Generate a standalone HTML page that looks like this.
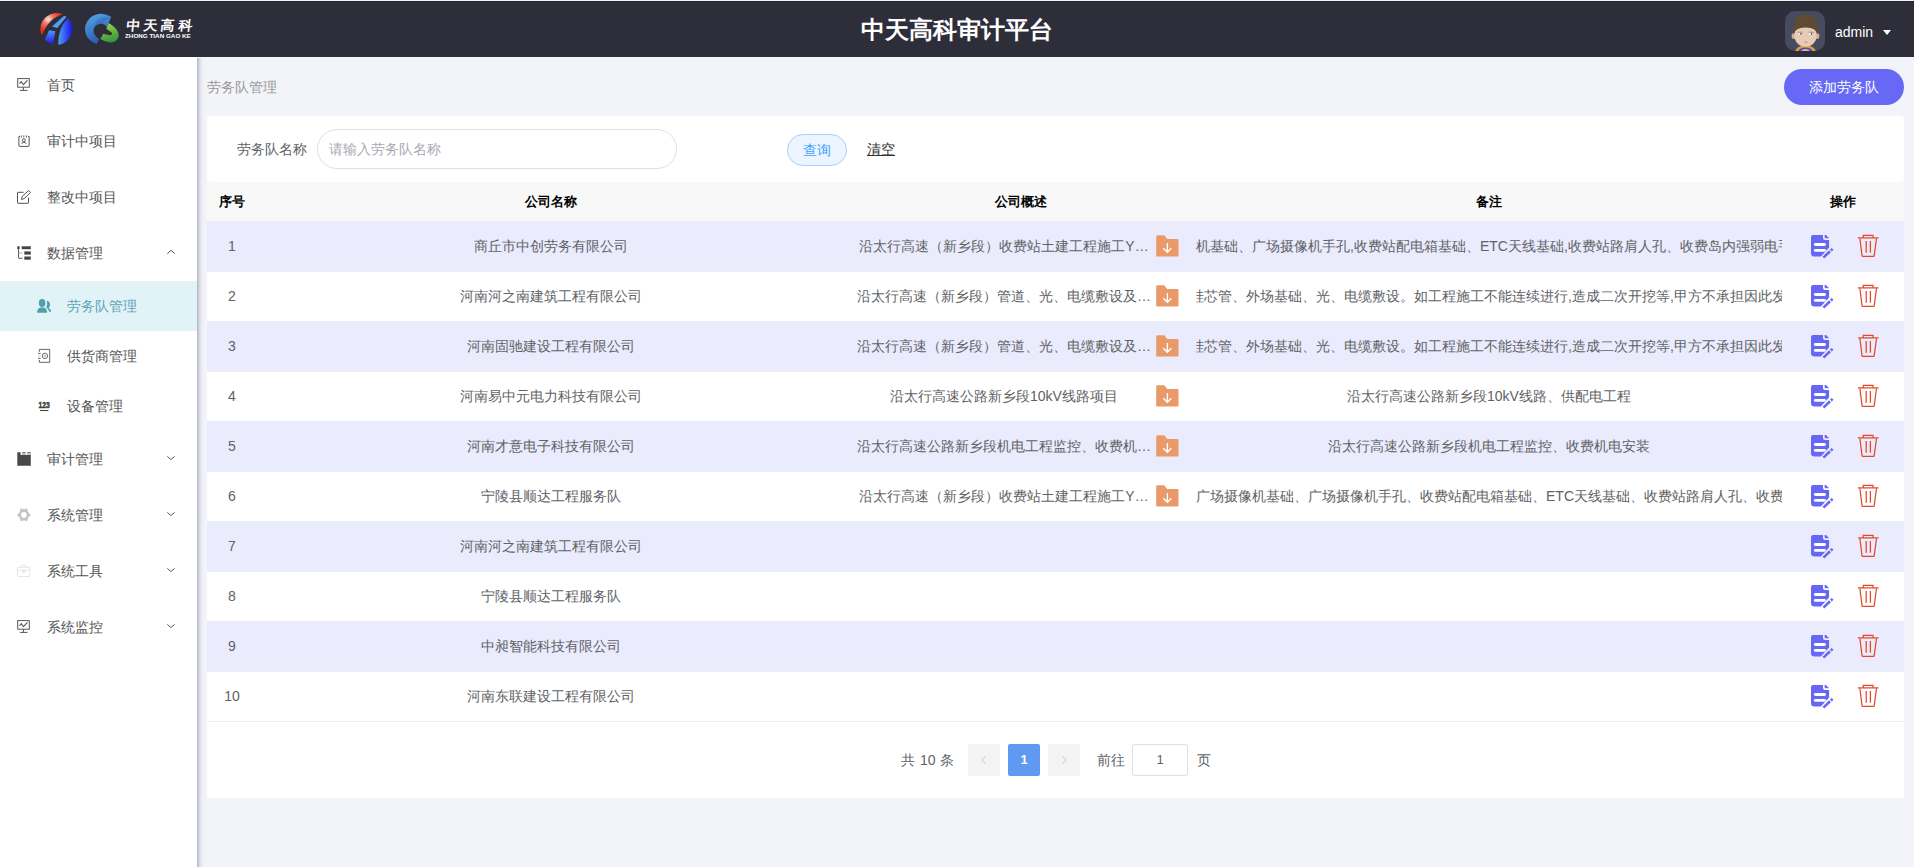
<!DOCTYPE html>
<html><head><meta charset="utf-8">
<style>
*{box-sizing:border-box;margin:0;padding:0}
html,body{width:1914px;height:867px;overflow:hidden;background:#f3f4f9;font-family:"Liberation Sans",sans-serif;font-size:14px;color:#606266}
.abs{position:absolute}
#hdr{position:absolute;left:0;top:0;width:1914px;height:57px;background:#2e2e3a;border-top:1px solid #f4f5f3}
#hdr:after{content:"";position:absolute;left:0;top:0;width:100%;height:1px;background:#23222f}
#title{position:absolute;left:0;width:1914px;top:14px;text-align:center;color:#fff;font-size:24px;font-weight:bold;line-height:30px}
#side{position:absolute;left:0;top:57px;width:197px;height:810px;background:#fff}
#shadow{position:absolute;left:197px;top:58px;width:10px;height:809px;background:linear-gradient(to right,#b9bcc8 0,#b9bcc8 1px,#c9ccd6 1px,#c9ccd6 2px,#d6d9e2 2px,#d6d9e2 3px,#e2e3ea 3px,#e2e3ea 4px,#eaebf1 4px,#eaebf1 5px,#eeeff5 5px,#eeeff5 6px,#f1f2f7 6px,#f1f2f7 8px,#f3f4f9 8px)}
.mi{position:absolute;left:0;width:197px;height:56px;color:#555}
.mi .t{position:absolute;left:47px;top:0;line-height:56px;font-size:14px}
.mi svg{position:absolute}
.sub{height:50px}
.sub .t{left:67px;line-height:50px}
.act{background:#e2f3f8}
.act .t{color:#5ba5b5}
.chev{position:absolute;left:165px;width:11px;height:7px}
#crumb{position:absolute;left:207px;top:78px;color:#999;font-size:14px;line-height:18px}
#addbtn{position:absolute;left:1784px;top:69px;width:120px;height:36px;border-radius:18px;background:#6768f5;color:#fff;text-align:center;line-height:36px;font-size:14px}
#card{position:absolute;left:207px;top:116px;width:1697px;height:66px;background:#fff;border-radius:4px}
#lbl{position:absolute;left:237px;top:140px;line-height:18px;color:#606266}
#inp{position:absolute;left:317px;top:129px;width:360px;height:40px;border:1px solid #dcdfe6;border-radius:20px;background:#fff}
#inp span{position:absolute;left:11px;top:10px;line-height:18px;color:#a8abb2}
#qbtn{position:absolute;left:787px;top:134px;width:60px;height:32px;border:1px solid #a9d0ff;border-radius:16px;background:#ecf5ff;color:#409eff;text-align:center;line-height:30px;font-size:14px}
#clr{position:absolute;left:867px;top:140px;line-height:18px;color:#303133;text-decoration:underline}
#thead{position:absolute;left:207px;top:182px;width:1697px;height:40px;background:#f8f8f8;border-bottom:1px solid #ebeef5}
.th{position:absolute;top:0;height:39px;line-height:39px;text-align:center;color:#000;font-weight:bold;font-size:13px}
.row{position:absolute;left:207px;width:1697px;height:50px;background:#fff;border-bottom:1px solid #ebeef5}
.row.odd{background:#eaebfc}
.c{position:absolute;top:0;height:49px;line-height:49px;text-align:center;white-space:nowrap;overflow:hidden;color:#606266}
.c1{left:0;width:50px}
.c2{left:50px;width:587px}
.c3{left:639px;width:350px}
.c4{left:989px;width:586px}
.c5{left:1575px;width:122px}
.ov{position:absolute;top:0}
.ds{position:absolute;top:0;left:11px;width:294px;overflow:hidden;text-overflow:ellipsis;text-align:center}
.fold{position:absolute;left:305px;top:8px}
.ed{position:absolute;left:24px;top:8px}
.tr{position:absolute;left:70px;top:8px}
#pag{position:absolute;left:207px;top:722px;width:1697px;height:76px;background:#fff}
.pb{position:absolute;top:744px;width:32px;height:32px;background:#f4f4f5;border-radius:2px}
#pact{position:absolute;left:1008px;top:744px;width:32px;height:32px;background:#6099f2;border-radius:2px;color:#fff;font-weight:bold;text-align:center;line-height:32px;font-size:13px}
#pinp{position:absolute;left:1132px;top:744px;width:56px;height:32px;border:1px solid #dcdfe6;border-radius:3px;background:#fff;text-align:center;line-height:30px;font-size:13px;color:#606266}
.ptxt{position:absolute;top:751px;line-height:18px;font-size:14px;color:#606266;word-spacing:1px}
</style></head>
<body>
<div id="hdr">
  <div id="title">中天高科审计平台</div>
</div>
<svg class="abs" style="left:36px;top:8px" width="90" height="42" viewBox="0 0 90 42">
 <defs>
  <radialGradient id="gr" cx="0.35" cy="0.3" r="0.75"><stop offset="0" stop-color="#f8e4e0"/><stop offset="0.3" stop-color="#ee7a6a"/><stop offset="0.7" stop-color="#e8341e"/><stop offset="1" stop-color="#e22a14"/></radialGradient>
  <linearGradient id="gb1" x1="0" y1="0" x2="0" y2="1"><stop offset="0" stop-color="#4a9cf4"/><stop offset="1" stop-color="#2a10f0"/></linearGradient>
  <linearGradient id="gb2" x1="0" y1="0" x2="1" y2="0"><stop offset="0" stop-color="#4aa2f2"/><stop offset="1" stop-color="#1e12ee"/></linearGradient>
  <linearGradient id="gc" x1="0" y1="0" x2="0.4" y2="1"><stop offset="0" stop-color="#58a8ea"/><stop offset="1" stop-color="#2a5cb0"/></linearGradient>
  <linearGradient id="gg" x1="0" y1="0" x2="0.3" y2="1"><stop offset="0" stop-color="#a8d850"/><stop offset="1" stop-color="#3a9a3a"/></linearGradient>
 </defs>
 <path fill="url(#gr)" d="M5.3 26.2A16 16 0 0 1 26.9 6.3Q13 10 6.2 26.6Z"/>
 <path fill="#4aa0f2" d="M16 18.4L28.1 7.7L30.5 8.7L21.3 19.9Z"/>
 <path fill="url(#gb1)" d="M13.1 22.3L19.4 23.3L16.7 36.3Q11.5 34.6 9 31.5Z"/>
 <path fill="url(#gb2)" d="M32 10.2A16 16 0 0 1 22.3 36.8Q21.8 20 32 10.2Z"/>
 <path fill="url(#gc)" d="M75.1 8.7Q64 2.5 54.5 9.5Q46 17 50.5 28Q54 33.5 60.6 35.9L63 31Q57.5 28 57.5 22Q58.5 15.5 66 15.5Q69.5 16.5 71 19Z"/>
 <path fill="url(#gg)" d="M72.7 15Q82 20.5 82.8 27Q82.5 34 74.6 34.4Q68.5 34 64.4 31L67.3 25.7Q71 27 74.5 27.3Q77 26.5 75.6 24.5L70.3 20.8Z"/>
 <path fill="#2f6cc0" opacity="0.55" d="M58.5 16Q62 9 70 9.5Q73.5 10.5 75.1 8.7Q69 13 66 15.5Q61 15.5 58.5 19Z"/>
</svg>
<div class="abs" style="left:127px;top:16px;color:#fff;font-weight:bold;font-size:14px;line-height:20px;white-space:nowrap;letter-spacing:3.4px;transform-origin:0 0;transform:skewX(-6deg) scaleY(0.95)">中天高科</div>
<div class="abs" style="left:125px;top:33px;color:#fff;font-weight:bold;font-size:6px;line-height:6px;white-space:nowrap;transform-origin:0 0;transform:scaleX(1.05)">ZHONG TIAN GAO KE</div>
<svg class="abs" style="left:1785px;top:11px" width="40" height="40" viewBox="0 0 40 40">
 <defs><clipPath id="av"><rect width="40" height="40" rx="10"/></clipPath></defs>
 <g clip-path="url(#av)">
 <rect width="40" height="40" fill="#464b5d"/>
 <path d="M10 41Q11 35 20.5 34.5Q30 35 31 41Z" fill="#d7a43c"/>
 <path d="M13 41Q14 36.5 20.5 36.5Q27 36.5 28 41Z" fill="#5b48b0"/>
 <path d="M16 41Q16.5 38 20.5 38Q24.5 38 25 41Z" fill="#e0b890"/>
 <ellipse cx="8.6" cy="25" rx="2" ry="3" fill="#d9ae94"/>
 <ellipse cx="32.4" cy="25" rx="2" ry="3" fill="#d9ae94"/>
 <ellipse cx="20.5" cy="24.5" rx="11.2" ry="11.3" fill="#e7cbb5"/>
 <path d="M8.2 24Q6.8 3.5 20.5 3.6Q34.2 3.5 33 24Q31.8 16.8 20.5 16.4Q9.5 16.8 8.2 24Z" fill="#5f4b31"/>
 
 <ellipse cx="15.3" cy="22.8" rx="2.4" ry="1" fill="#f2f2f2"/>
 <ellipse cx="26" cy="22.8" rx="2.4" ry="1" fill="#f2f2f2"/>
 <circle cx="16" cy="22.9" r="0.8" fill="#3a3a3a"/>
 <circle cx="26.6" cy="22.9" r="0.8" fill="#3a3a3a"/>
 <path d="M12.5 21.3L18 21.2M23.5 21.2L29 21.3" stroke="#9a7a60" stroke-width="0.7"/>
 <path d="M19 31H22.5" stroke="#b8887a" stroke-width="0.8"/>
 </g>
</svg>
<div class="abs" style="left:1835px;top:24px;color:#fff;font-size:14px;line-height:16px">admin</div>
<svg class="abs" style="left:1882px;top:29px" width="10" height="7" viewBox="0 0 10 7"><path d="M1 1H9L5 6Z" fill="#fff"/></svg>
<div id="side">
 <div class="mi" style="top:0"><span class="t">首页</span></div>
 <div class="mi" style="top:56px"><span class="t">审计中项目</span></div>
 <div class="mi" style="top:112px"><span class="t">整改中项目</span></div>
 <div class="mi" style="top:168px"><span class="t">数据管理</span></div>
 <div class="mi sub act" style="top:224px"><span class="t">劳务队管理</span></div>
 <div class="mi sub" style="top:274px"><span class="t">供货商管理</span></div>
 <div class="mi sub" style="top:324px"><span class="t">设备管理</span></div>
 <div class="mi" style="top:374px"><span class="t">审计管理</span></div>
 <div class="mi" style="top:430px"><span class="t">系统管理</span></div>
 <div class="mi" style="top:486px"><span class="t">系统工具</span></div>
 <div class="mi" style="top:542px"><span class="t">系统监控</span></div>
</div>
<svg class="abs" style="left:12px;top:72px" width="24" height="24" viewBox="0 0 24 24" fill="none" stroke="#555" stroke-width="1"><rect x="5.7" y="6.6" width="11.6" height="8.6"/><path d="M11.4 15.2V18.4M7.9 18.4H15.5"/><path d="M7.5 11.6L9.4 9.6L11.4 12.7L15.5 8.3" stroke-width="1.1"/></svg>
<svg class="abs" style="left:12px;top:129px" width="24" height="24" viewBox="0 0 24 24" fill="none" stroke="#555" stroke-width="1"><path d="M8 7.4H6.9V16.9Q6.9 17.4 7.4 17.4H16.6Q17.1 17.4 17.1 16.9V7.4H16"/><path d="M9.4 6.4V8.6M11.8 6.4V8.6M14.4 6.4V8.6" stroke-width="0.9"/><circle cx="11.8" cy="11.3" r="1.5"/><path d="M9.4 14.4Q11.8 11.6 14.4 14.4"/></svg>
<svg class="abs" style="left:12px;top:185px" width="24" height="24" viewBox="0 0 24 24" fill="none" stroke="#555" stroke-width="1"><path d="M11.6 7.3H6Q5.5 7.3 5.5 7.8V17.8Q5.5 18.3 6 18.3H16Q16.5 18.3 16.5 17.8V12.7"/><path d="M9.4 14.4L10.2 11.4L16.7 5.5L18.6 7.4L12.2 13.6Z"/></svg>
<svg class="abs" style="left:12px;top:241px" width="24" height="24" viewBox="0 0 24 24"><rect x="5.3" y="5.3" width="2.3" height="2.7" fill="#444"/><path d="M6.5 8V16.8Q6.5 17.3 7 17.3H10.5" stroke="#444" stroke-width="0.9" fill="none"/><path d="M6.5 11.9H10.5" stroke="#aaa" stroke-width="0.9"/><rect x="9.7" y="5.3" width="9.1" height="2.9" fill="#444"/><rect x="12.3" y="10.4" width="6.5" height="3.2" fill="#444"/><rect x="12.3" y="15.5" width="6.5" height="3.2" fill="#444"/></svg>
<svg class="abs" style="left:32px;top:294px" width="24" height="24" viewBox="0 0 24 24"><path fill="#4fa0ad" d="M14.8 6.6Q18.3 7.6 18 11.2Q17.7 13 16.6 13.7Q19.2 15 19.2 17.8L17.2 17.8Q16.8 15 14.4 13.8Q15.8 10.5 14.8 6.6Z"/><ellipse cx="10.1" cy="9.1" rx="3.3" ry="4" fill="#4fa0ad"/><path fill="#4fa0ad" d="M5.1 18.8Q5 14.6 8.4 13.5H11.9Q15.2 14.6 15.1 18.8Z"/></svg>
<svg class="abs" style="left:32px;top:344px" width="24" height="24" viewBox="0 0 24 24" fill="none" stroke="#555" stroke-width="0.9"><path d="M7.4 7.8V5.4H17.7V18.3H7.4V16"/><path d="M6 9.4H8.6M6 14.4H8.6"/><path d="M6 11.9H8.6" stroke="#bbb"/><circle cx="12.9" cy="11.9" r="2.7"/><rect x="12.2" y="11" width="1.4" height="1.6" fill="#888" stroke="none"/></svg>
<svg class="abs" style="left:32px;top:394px" width="24" height="24" viewBox="0 0 24 24"><text x="6.5" y="13.8" font-family="Liberation Sans" font-weight="bold" font-size="9.3" fill="#3a3a3a" stroke="#3a3a3a" stroke-width="0.45" textLength="11.4" lengthAdjust="spacingAndGlyphs">123</text><path d="M8 16.5H16.4" stroke="#444" stroke-width="1.1"/></svg>
<svg class="abs" style="left:12px;top:447px" width="24" height="24" viewBox="0 0 24 24"><path fill="#494949" d="M5.3 5.3H8.6V8H18.8V18.7H5.3Z"/><rect x="10.1" y="5.3" width="3.6" height="1" fill="#494949"/><rect x="15.2" y="5.3" width="3.6" height="1" fill="#494949"/><rect x="10.1" y="6.3" width="3.6" height="1.7" fill="#bbb"/><rect x="15.2" y="6.3" width="3.6" height="1.7" fill="#bbb"/></svg>
<svg class="abs" style="left:12px;top:503px" width="24" height="24" viewBox="0 0 24 24"><path fill="#c4c4c4" fill-rule="evenodd" d="M8.3 6.3L9.6 5.3L10.6 6.3H13.2L14.3 5.3L15.5 6.3L16 8.9L18.8 11.9L16 14.9L15.5 17.5L14.3 18.5L13.2 17.5H10.6L9.6 18.5L8.3 17.5L7.8 14.9L5.1 11.9L7.8 8.9ZM11.9 9.1A2.8 2.8 0 1 0 11.9 14.7A2.8 2.8 0 1 0 11.9 9.1Z"/></svg>
<svg class="abs" style="left:12px;top:559px" width="24" height="24" viewBox="0 0 24 24" fill="none" stroke="#e3e3e3" stroke-width="0.9"><rect x="5.4" y="8.3" width="12.4" height="9.2" rx="0.6"/><path d="M9.3 8.3V6.2H13.9V8.3M5.4 11.4H17.8"/><circle cx="11.9" cy="12.4" r="1" fill="#e0e0e0"/></svg>
<svg class="abs" style="left:12px;top:614px" width="24" height="24" viewBox="0 0 24 24" fill="none" stroke="#555" stroke-width="1"><rect x="5.7" y="6.6" width="11.6" height="8.6"/><path d="M11.4 15.2V18.4M7.9 18.4H15.5"/><path d="M7.5 11.6L9.4 9.6L11.4 12.7L15.5 8.3" stroke-width="1.1"/></svg>
<svg class="abs" style="left:158px;top:240px" width="24" height="24" viewBox="0 0 24 24" fill="none" stroke="#555" stroke-width="1"><path d="M9.3 13.6L12.9 10.3L16.8 13.6"/></svg>
<svg class="abs" style="left:158px;top:446px" width="24" height="24" viewBox="0 0 24 24" fill="none" stroke="#555" stroke-width="1"><path d="M9.3 10.4L12.9 13.6L16.7 10.4"/></svg>
<svg class="abs" style="left:158px;top:502px" width="24" height="24" viewBox="0 0 24 24" fill="none" stroke="#555" stroke-width="1"><path d="M9.3 10.4L12.9 13.6L16.7 10.4"/></svg>
<svg class="abs" style="left:158px;top:558px" width="24" height="24" viewBox="0 0 24 24" fill="none" stroke="#555" stroke-width="1"><path d="M9.3 10.4L12.9 13.6L16.7 10.4"/></svg>
<svg class="abs" style="left:158px;top:614px" width="24" height="24" viewBox="0 0 24 24" fill="none" stroke="#555" stroke-width="1"><path d="M9.3 10.4L12.9 13.6L16.7 10.4"/></svg>
<div id="shadow"></div>
<div id="crumb">劳务队管理</div>
<div id="addbtn">添加劳务队</div>
<div id="card"></div>
<div id="lbl">劳务队名称</div>
<div id="inp"><span>请输入劳务队名称</span></div>
<div id="qbtn">查询</div>
<div id="clr">清空</div>
<div id="thead">
  <div class="th c1">序号</div>
  <div class="th c2">公司名称</div>
  <div class="th c3">公司概述</div>
  <div class="th c4">备注</div>
  <div class="th c5">操作</div>
</div>
<div class="row odd" style="top:222px"><div class="c c1">1</div><div class="c c2">商丘市中创劳务有限公司</div><div class="c c3"><span class="ds">沿太行高速（新乡段）收费站土建工程施工Y…</span><svg class="fold" width="32" height="32" viewBox="0 0 32 32"><path fill="#e99a68" d="M5.2 6.4Q5.2 5.2 6.4 5.2H13.3L16.2 8.9H26.3Q27.5 8.9 27.5 10.1V25.4Q27.5 26.6 26.3 26.6H6.4Q5.2 26.6 5.2 25.4Z"/><path d="M16.4 13.1V22M12.3 18.2L16.4 22.2L20.4 18.2" stroke="#fff" stroke-width="1.4" fill="none"/></svg></div><div class="c c4"><span class="ov" style="left:0px">机基础、广场摄像机手孔,收费站配电箱基础、ETC天线基础,收费站路肩人孔、收费岛内强弱电手孔</span></div><div class="c c5"><svg class="ed" width="32" height="32" viewBox="0 0 32 32"><path fill="#6667f4" d="M5 7Q5 5 7 5H17V8Q17 10 19 10H23.1V17.6L14.9 26.6H8.6Q5 26.6 5 23Z"/><path fill="#6667f4" d="M18.6 5H20L23.1 8.2H19.6Q18.6 8.2 18.6 7.2Z"/><rect x="7.9" y="13.1" width="12" height="2.8" rx="1.4" fill="#fff"/><rect x="7.9" y="19" width="12" height="2.8" rx="1.4" fill="#fff"/><path d="M17.4 27.6L24 21.3M24.9 20.5L26.6 18.9" stroke="#6667f4" stroke-width="2.6"/></svg><svg class="tr" width="32" height="32" viewBox="0 0 32 32" fill="none" stroke="#e4472b" stroke-width="1.25"><path d="M5.9 7.9H26.6"/><path d="M11.3 7.9V5.3H21V7.9"/><path d="M7.9 8.5L10 25.6Q10.1 26.4 10.9 26.4H21.3Q22.1 26.4 22.2 25.6L24.5 8.5"/><path d="M14.2 11.1V22.7M18.4 11.1V22.7"/></svg></div></div>
<div class="row" style="top:272px"><div class="c c1">2</div><div class="c c2">河南河之南建筑工程有限公司</div><div class="c c3"><span class="ds">沿太行高速（新乡段）管道、光、电缆敷设及…</span><svg class="fold" width="32" height="32" viewBox="0 0 32 32"><path fill="#e99a68" d="M5.2 6.4Q5.2 5.2 6.4 5.2H13.3L16.2 8.9H26.3Q27.5 8.9 27.5 10.1V25.4Q27.5 26.6 26.3 26.6H6.4Q5.2 26.6 5.2 25.4Z"/><path d="M16.4 13.1V22M12.3 18.2L16.4 22.2L20.4 18.2" stroke="#fff" stroke-width="1.4" fill="none"/></svg></div><div class="c c4"><span class="ov" style="left:-6px">硅芯管、外场基础、光、电缆敷设。如工程施工不能连续进行,造成二次开挖等,甲方不承担因此发生</span></div><div class="c c5"><svg class="ed" width="32" height="32" viewBox="0 0 32 32"><path fill="#6667f4" d="M5 7Q5 5 7 5H17V8Q17 10 19 10H23.1V17.6L14.9 26.6H8.6Q5 26.6 5 23Z"/><path fill="#6667f4" d="M18.6 5H20L23.1 8.2H19.6Q18.6 8.2 18.6 7.2Z"/><rect x="7.9" y="13.1" width="12" height="2.8" rx="1.4" fill="#fff"/><rect x="7.9" y="19" width="12" height="2.8" rx="1.4" fill="#fff"/><path d="M17.4 27.6L24 21.3M24.9 20.5L26.6 18.9" stroke="#6667f4" stroke-width="2.6"/></svg><svg class="tr" width="32" height="32" viewBox="0 0 32 32" fill="none" stroke="#e4472b" stroke-width="1.25"><path d="M5.9 7.9H26.6"/><path d="M11.3 7.9V5.3H21V7.9"/><path d="M7.9 8.5L10 25.6Q10.1 26.4 10.9 26.4H21.3Q22.1 26.4 22.2 25.6L24.5 8.5"/><path d="M14.2 11.1V22.7M18.4 11.1V22.7"/></svg></div></div>
<div class="row odd" style="top:322px"><div class="c c1">3</div><div class="c c2">河南固驰建设工程有限公司</div><div class="c c3"><span class="ds">沿太行高速（新乡段）管道、光、电缆敷设及…</span><svg class="fold" width="32" height="32" viewBox="0 0 32 32"><path fill="#e99a68" d="M5.2 6.4Q5.2 5.2 6.4 5.2H13.3L16.2 8.9H26.3Q27.5 8.9 27.5 10.1V25.4Q27.5 26.6 26.3 26.6H6.4Q5.2 26.6 5.2 25.4Z"/><path d="M16.4 13.1V22M12.3 18.2L16.4 22.2L20.4 18.2" stroke="#fff" stroke-width="1.4" fill="none"/></svg></div><div class="c c4"><span class="ov" style="left:-6px">硅芯管、外场基础、光、电缆敷设。如工程施工不能连续进行,造成二次开挖等,甲方不承担因此发生</span></div><div class="c c5"><svg class="ed" width="32" height="32" viewBox="0 0 32 32"><path fill="#6667f4" d="M5 7Q5 5 7 5H17V8Q17 10 19 10H23.1V17.6L14.9 26.6H8.6Q5 26.6 5 23Z"/><path fill="#6667f4" d="M18.6 5H20L23.1 8.2H19.6Q18.6 8.2 18.6 7.2Z"/><rect x="7.9" y="13.1" width="12" height="2.8" rx="1.4" fill="#fff"/><rect x="7.9" y="19" width="12" height="2.8" rx="1.4" fill="#fff"/><path d="M17.4 27.6L24 21.3M24.9 20.5L26.6 18.9" stroke="#6667f4" stroke-width="2.6"/></svg><svg class="tr" width="32" height="32" viewBox="0 0 32 32" fill="none" stroke="#e4472b" stroke-width="1.25"><path d="M5.9 7.9H26.6"/><path d="M11.3 7.9V5.3H21V7.9"/><path d="M7.9 8.5L10 25.6Q10.1 26.4 10.9 26.4H21.3Q22.1 26.4 22.2 25.6L24.5 8.5"/><path d="M14.2 11.1V22.7M18.4 11.1V22.7"/></svg></div></div>
<div class="row" style="top:372px"><div class="c c1">4</div><div class="c c2">河南易中元电力科技有限公司</div><div class="c c3"><span class="ds">沿太行高速公路新乡段10kV线路项目</span><svg class="fold" width="32" height="32" viewBox="0 0 32 32"><path fill="#e99a68" d="M5.2 6.4Q5.2 5.2 6.4 5.2H13.3L16.2 8.9H26.3Q27.5 8.9 27.5 10.1V25.4Q27.5 26.6 26.3 26.6H6.4Q5.2 26.6 5.2 25.4Z"/><path d="M16.4 13.1V22M12.3 18.2L16.4 22.2L20.4 18.2" stroke="#fff" stroke-width="1.4" fill="none"/></svg></div><div class="c c4">沿太行高速公路新乡段10kV线路、供配电工程</div><div class="c c5"><svg class="ed" width="32" height="32" viewBox="0 0 32 32"><path fill="#6667f4" d="M5 7Q5 5 7 5H17V8Q17 10 19 10H23.1V17.6L14.9 26.6H8.6Q5 26.6 5 23Z"/><path fill="#6667f4" d="M18.6 5H20L23.1 8.2H19.6Q18.6 8.2 18.6 7.2Z"/><rect x="7.9" y="13.1" width="12" height="2.8" rx="1.4" fill="#fff"/><rect x="7.9" y="19" width="12" height="2.8" rx="1.4" fill="#fff"/><path d="M17.4 27.6L24 21.3M24.9 20.5L26.6 18.9" stroke="#6667f4" stroke-width="2.6"/></svg><svg class="tr" width="32" height="32" viewBox="0 0 32 32" fill="none" stroke="#e4472b" stroke-width="1.25"><path d="M5.9 7.9H26.6"/><path d="M11.3 7.9V5.3H21V7.9"/><path d="M7.9 8.5L10 25.6Q10.1 26.4 10.9 26.4H21.3Q22.1 26.4 22.2 25.6L24.5 8.5"/><path d="M14.2 11.1V22.7M18.4 11.1V22.7"/></svg></div></div>
<div class="row odd" style="top:422px"><div class="c c1">5</div><div class="c c2">河南才意电子科技有限公司</div><div class="c c3"><span class="ds">沿太行高速公路新乡段机电工程监控、收费机…</span><svg class="fold" width="32" height="32" viewBox="0 0 32 32"><path fill="#e99a68" d="M5.2 6.4Q5.2 5.2 6.4 5.2H13.3L16.2 8.9H26.3Q27.5 8.9 27.5 10.1V25.4Q27.5 26.6 26.3 26.6H6.4Q5.2 26.6 5.2 25.4Z"/><path d="M16.4 13.1V22M12.3 18.2L16.4 22.2L20.4 18.2" stroke="#fff" stroke-width="1.4" fill="none"/></svg></div><div class="c c4">沿太行高速公路新乡段机电工程监控、收费机电安装</div><div class="c c5"><svg class="ed" width="32" height="32" viewBox="0 0 32 32"><path fill="#6667f4" d="M5 7Q5 5 7 5H17V8Q17 10 19 10H23.1V17.6L14.9 26.6H8.6Q5 26.6 5 23Z"/><path fill="#6667f4" d="M18.6 5H20L23.1 8.2H19.6Q18.6 8.2 18.6 7.2Z"/><rect x="7.9" y="13.1" width="12" height="2.8" rx="1.4" fill="#fff"/><rect x="7.9" y="19" width="12" height="2.8" rx="1.4" fill="#fff"/><path d="M17.4 27.6L24 21.3M24.9 20.5L26.6 18.9" stroke="#6667f4" stroke-width="2.6"/></svg><svg class="tr" width="32" height="32" viewBox="0 0 32 32" fill="none" stroke="#e4472b" stroke-width="1.25"><path d="M5.9 7.9H26.6"/><path d="M11.3 7.9V5.3H21V7.9"/><path d="M7.9 8.5L10 25.6Q10.1 26.4 10.9 26.4H21.3Q22.1 26.4 22.2 25.6L24.5 8.5"/><path d="M14.2 11.1V22.7M18.4 11.1V22.7"/></svg></div></div>
<div class="row" style="top:472px"><div class="c c1">6</div><div class="c c2">宁陵县顺达工程服务队</div><div class="c c3"><span class="ds">沿太行高速（新乡段）收费站土建工程施工Y…</span><svg class="fold" width="32" height="32" viewBox="0 0 32 32"><path fill="#e99a68" d="M5.2 6.4Q5.2 5.2 6.4 5.2H13.3L16.2 8.9H26.3Q27.5 8.9 27.5 10.1V25.4Q27.5 26.6 26.3 26.6H6.4Q5.2 26.6 5.2 25.4Z"/><path d="M16.4 13.1V22M12.3 18.2L16.4 22.2L20.4 18.2" stroke="#fff" stroke-width="1.4" fill="none"/></svg></div><div class="c c4"><span class="ov" style="left:0px">广场摄像机基础、广场摄像机手孔、收费站配电箱基础、ETC天线基础、收费站路肩人孔、收费</span></div><div class="c c5"><svg class="ed" width="32" height="32" viewBox="0 0 32 32"><path fill="#6667f4" d="M5 7Q5 5 7 5H17V8Q17 10 19 10H23.1V17.6L14.9 26.6H8.6Q5 26.6 5 23Z"/><path fill="#6667f4" d="M18.6 5H20L23.1 8.2H19.6Q18.6 8.2 18.6 7.2Z"/><rect x="7.9" y="13.1" width="12" height="2.8" rx="1.4" fill="#fff"/><rect x="7.9" y="19" width="12" height="2.8" rx="1.4" fill="#fff"/><path d="M17.4 27.6L24 21.3M24.9 20.5L26.6 18.9" stroke="#6667f4" stroke-width="2.6"/></svg><svg class="tr" width="32" height="32" viewBox="0 0 32 32" fill="none" stroke="#e4472b" stroke-width="1.25"><path d="M5.9 7.9H26.6"/><path d="M11.3 7.9V5.3H21V7.9"/><path d="M7.9 8.5L10 25.6Q10.1 26.4 10.9 26.4H21.3Q22.1 26.4 22.2 25.6L24.5 8.5"/><path d="M14.2 11.1V22.7M18.4 11.1V22.7"/></svg></div></div>
<div class="row odd" style="top:522px"><div class="c c1">7</div><div class="c c2">河南河之南建筑工程有限公司</div><div class="c c3"></div><div class="c c4"></div><div class="c c5"><svg class="ed" width="32" height="32" viewBox="0 0 32 32"><path fill="#6667f4" d="M5 7Q5 5 7 5H17V8Q17 10 19 10H23.1V17.6L14.9 26.6H8.6Q5 26.6 5 23Z"/><path fill="#6667f4" d="M18.6 5H20L23.1 8.2H19.6Q18.6 8.2 18.6 7.2Z"/><rect x="7.9" y="13.1" width="12" height="2.8" rx="1.4" fill="#fff"/><rect x="7.9" y="19" width="12" height="2.8" rx="1.4" fill="#fff"/><path d="M17.4 27.6L24 21.3M24.9 20.5L26.6 18.9" stroke="#6667f4" stroke-width="2.6"/></svg><svg class="tr" width="32" height="32" viewBox="0 0 32 32" fill="none" stroke="#e4472b" stroke-width="1.25"><path d="M5.9 7.9H26.6"/><path d="M11.3 7.9V5.3H21V7.9"/><path d="M7.9 8.5L10 25.6Q10.1 26.4 10.9 26.4H21.3Q22.1 26.4 22.2 25.6L24.5 8.5"/><path d="M14.2 11.1V22.7M18.4 11.1V22.7"/></svg></div></div>
<div class="row" style="top:572px"><div class="c c1">8</div><div class="c c2">宁陵县顺达工程服务队</div><div class="c c3"></div><div class="c c4"></div><div class="c c5"><svg class="ed" width="32" height="32" viewBox="0 0 32 32"><path fill="#6667f4" d="M5 7Q5 5 7 5H17V8Q17 10 19 10H23.1V17.6L14.9 26.6H8.6Q5 26.6 5 23Z"/><path fill="#6667f4" d="M18.6 5H20L23.1 8.2H19.6Q18.6 8.2 18.6 7.2Z"/><rect x="7.9" y="13.1" width="12" height="2.8" rx="1.4" fill="#fff"/><rect x="7.9" y="19" width="12" height="2.8" rx="1.4" fill="#fff"/><path d="M17.4 27.6L24 21.3M24.9 20.5L26.6 18.9" stroke="#6667f4" stroke-width="2.6"/></svg><svg class="tr" width="32" height="32" viewBox="0 0 32 32" fill="none" stroke="#e4472b" stroke-width="1.25"><path d="M5.9 7.9H26.6"/><path d="M11.3 7.9V5.3H21V7.9"/><path d="M7.9 8.5L10 25.6Q10.1 26.4 10.9 26.4H21.3Q22.1 26.4 22.2 25.6L24.5 8.5"/><path d="M14.2 11.1V22.7M18.4 11.1V22.7"/></svg></div></div>
<div class="row odd" style="top:622px"><div class="c c1">9</div><div class="c c2">中昶智能科技有限公司</div><div class="c c3"></div><div class="c c4"></div><div class="c c5"><svg class="ed" width="32" height="32" viewBox="0 0 32 32"><path fill="#6667f4" d="M5 7Q5 5 7 5H17V8Q17 10 19 10H23.1V17.6L14.9 26.6H8.6Q5 26.6 5 23Z"/><path fill="#6667f4" d="M18.6 5H20L23.1 8.2H19.6Q18.6 8.2 18.6 7.2Z"/><rect x="7.9" y="13.1" width="12" height="2.8" rx="1.4" fill="#fff"/><rect x="7.9" y="19" width="12" height="2.8" rx="1.4" fill="#fff"/><path d="M17.4 27.6L24 21.3M24.9 20.5L26.6 18.9" stroke="#6667f4" stroke-width="2.6"/></svg><svg class="tr" width="32" height="32" viewBox="0 0 32 32" fill="none" stroke="#e4472b" stroke-width="1.25"><path d="M5.9 7.9H26.6"/><path d="M11.3 7.9V5.3H21V7.9"/><path d="M7.9 8.5L10 25.6Q10.1 26.4 10.9 26.4H21.3Q22.1 26.4 22.2 25.6L24.5 8.5"/><path d="M14.2 11.1V22.7M18.4 11.1V22.7"/></svg></div></div>
<div class="row" style="top:672px"><div class="c c1">10</div><div class="c c2">河南东联建设工程有限公司</div><div class="c c3"></div><div class="c c4"></div><div class="c c5"><svg class="ed" width="32" height="32" viewBox="0 0 32 32"><path fill="#6667f4" d="M5 7Q5 5 7 5H17V8Q17 10 19 10H23.1V17.6L14.9 26.6H8.6Q5 26.6 5 23Z"/><path fill="#6667f4" d="M18.6 5H20L23.1 8.2H19.6Q18.6 8.2 18.6 7.2Z"/><rect x="7.9" y="13.1" width="12" height="2.8" rx="1.4" fill="#fff"/><rect x="7.9" y="19" width="12" height="2.8" rx="1.4" fill="#fff"/><path d="M17.4 27.6L24 21.3M24.9 20.5L26.6 18.9" stroke="#6667f4" stroke-width="2.6"/></svg><svg class="tr" width="32" height="32" viewBox="0 0 32 32" fill="none" stroke="#e4472b" stroke-width="1.25"><path d="M5.9 7.9H26.6"/><path d="M11.3 7.9V5.3H21V7.9"/><path d="M7.9 8.5L10 25.6Q10.1 26.4 10.9 26.4H21.3Q22.1 26.4 22.2 25.6L24.5 8.5"/><path d="M14.2 11.1V22.7M18.4 11.1V22.7"/></svg></div></div>

<div id="pag"></div>
<div class="ptxt" style="left:901px">共 10 条</div>
<div class="pb" style="left:968px"><svg class="abs" style="left:0;top:0" width="32" height="32" viewBox="0 0 32 32"><path d="M17.6 12.4L14 16L17.6 19.6" stroke="#c0c4cc" stroke-width="1" fill="none"/></svg></div>
<div id="pact">1</div>
<div class="pb" style="left:1048px"><svg class="abs" style="left:0;top:0" width="32" height="32" viewBox="0 0 32 32"><path d="M14.4 12.4L18 16L14.4 19.6" stroke="#c0c4cc" stroke-width="1" fill="none"/></svg></div>
<div class="ptxt" style="left:1097px">前往</div>
<div id="pinp">1</div>
<div class="ptxt" style="left:1197px">页</div>
</body></html>
